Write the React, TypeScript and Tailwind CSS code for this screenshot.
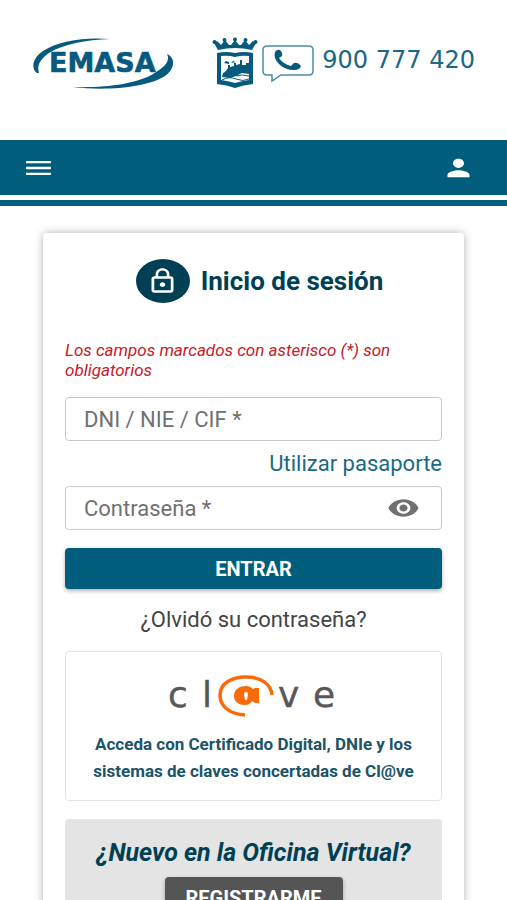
import { useState } from "react"
import { MdLockOutline, MdMenu, MdPerson, MdVisibility } from "react-icons/md"

function EmasaLogo() {
    return (
        <svg className="w-[144px] h-[54px] shrink-0" viewBox="0 0 144 54" role="img" aria-label="EMASA">
            <path d="M5 36C-1 32 0 21 11 14C28 3 54 0 78 2C54 3 31 7 17 16C7 23 5 29 7 36Z" fill="#075a7d" />
            <path d="M135 17C144 21 143 32 133 39C114 51 73 54 41 50C74 51 104 47 121 37C135 29 138 23 135 17Z" fill="#075a7d" />
            <text x="17" y="35" fontFamily="DejaVu Sans, sans-serif" fontWeight="700" fontSize="27" fill="#075a7d" stroke="#075a7d" strokeWidth="0.6">EMASA</text>
        </svg>
    )
}

function MalagaCrest() {
    return (
        <svg className="w-[46px] h-[52px] shrink-0" viewBox="0 0 46 52" fill="#075a7d" aria-hidden="true">
            <path d="M6 13L2 6L5 4L9 8L13 3L17 8H19L23 3L27 8H29L33 3L37 8L41 4L44 6L40 13Q23 9 6 13Z" />
            <circle cx="2.5" cy="5" r="2" />
            <circle cx="12.5" cy="3" r="2" />
            <circle cx="23" cy="2.5" r="2" />
            <circle cx="33.5" cy="3" r="2" />
            <circle cx="43.5" cy="5" r="2" />
            <path d="M5 16Q14 14 23 16Q32 14 41 16V47Q31 48 23 51Q15 48 5 47Z" />
            <path d="M9 19Q16 18 23 20Q30 18 37 19V43Q30 44 23 46Q16 44 9 43Z" fill="#fff" />
            <path d="M10 40L11 36L13 35L16 31V28H18V30L22 29V26H24V28L28 27V23H30V28H34V26H37V37L30 36L24 39L18 41Z" />
            <path d="M12 26L14 24L17 25V27ZM19 26L21 24L24 25Z" />
            <path d="M10 43Q17 39 24 42T37 42M24 39Q30 37 37 39" fill="none" stroke="#075a7d" strokeWidth="1" />
        </svg>
    )
}

function PhoneBubble() {
    return (
        <svg className="w-[52px] h-[38px] shrink-0" viewBox="0 0 52 38" aria-hidden="true">
            <path d="M5 1H47Q51 1 51 5V26Q51 30 47 30H19L10 36V30H5Q1 30 1 26V5Q1 1 5 1Z" fill="#fff" stroke="#4d8ea6" strokeWidth="1.5" />
            <path d="M13 7Q15 4 18 5Q21 8 20 11L17 13Q21 19 29 21L32 18Q36 17 39 21Q38 25 32 25Q23 25 17 19Q11 13 13 7Z" fill="#075a7d" />
        </svg>
    )
}

function ClaveLogo() {
    return (
        <svg className="w-[170px] h-[44px]" viewBox="0 0 170 44" fontFamily="DejaVu Sans, sans-serif" fontSize="36" fill="#58585a" role="img" aria-label="cl@ve">
            <g stroke="#58585a" strokeWidth="0.4">
                <text x="-1" y="33">c</text>
                <text x="33" y="33">l</text>
                <text x="109" y="33">v</text>
                <text x="144" y="33">e</text>
            </g>
            <path d="M76 41C60 40 51 32 51 21C51 9 63 3 77 3C92 3 102 10 103 21" fill="none" stroke="#f96a0b" strokeWidth="3.5" />
            <path d="M65 22C65 15 71 12 77 12C80 12 82 13 84 15L86 14H90V29H86L83 27C81 30 79 31 76 31C70 31 65 28 65 22Z" fill="#f96a0b" />
            <path d="M75 20A2 2 0 1 1 79 20L78 26H76Z" fill="#fff" />
        </svg>
    )
}

function App() {
    const [showPassword, setShowPassword] = useState(false)

    return (
        <div className="bg-white font-[Roboto,sans-serif]">
            <header>
                <div className="h-[140px] flex items-start justify-between px-8 pt-[37px]">
                    <EmasaLogo />
                    <div className="flex items-start">
                        <MalagaCrest />
                        <div className="flex items-start pt-2 ml-1">
                            <PhoneBubble />
                            <a href="tel:900777420" className="ml-2 mt-px text-2xl leading-7 whitespace-nowrap text-[#1d6685] font-['DejaVu_Sans',sans-serif]">900 777 420</a>
                        </div>
                    </div>
                </div>
                <nav className="h-[55px] flex items-center justify-between bg-[#005e7c] pl-[22px] pr-8 text-white">
                    <button type="button" aria-label="Menú">
                        <MdMenu className="w-[33px] h-7" preserveAspectRatio="none" />
                    </button>
                    <button type="button" aria-label="Mi cuenta">
                        <MdPerson className="w-[33px] h-7" preserveAspectRatio="none" />
                    </button>
                </nav>
                <div className="mt-[5px] h-1.5 bg-[#005e7c]" />
            </header>

            <main className="mx-[43px] mt-[27px] mb-8 rounded-sm bg-white px-[22px] pt-[26px] pb-6 shadow-[0_0_8px_rgba(0,0,0,0.3)]">
                <div className="flex items-center justify-center gap-[11px] pl-3">
                    <span className="w-[54px] h-11 rounded-[50%] bg-[#003f54] text-white flex items-center justify-center">
                        <MdLockOutline className="w-[33px] h-7" preserveAspectRatio="none" />
                    </span>
                    <h1 className="text-[26px] leading-8 font-bold text-[#003f54]">Inicio de sesión</h1>
                </div>

                <form onSubmit={(e) => e.preventDefault()}>
                    <p className="mt-[37px] text-[17px] leading-5 italic text-[#c62026]">Los campos marcados con asterisco (*) son obligatorios</p>
                    <input
                        type="text"
                        aria-label="DNI / NIE / CIF"
                        placeholder="DNI / NIE / CIF *"
                        required
                        className="mt-[17px] block h-11 w-full rounded border border-[#c8c8c8] px-[18px] text-[22px] text-[#333] placeholder:text-[#707070]"
                    />
                    <div className="flex h-[45px] items-center justify-end">
                        <a href="#pasaporte" className="text-[22px] text-[#1a6a86]">Utilizar pasaporte</a>
                    </div>
                    <div className="flex h-11 items-center rounded border border-[#c8c8c8] pr-[21px] pl-[18px]">
                        <input
                            type={showPassword ? "text" : "password"}
                            aria-label="Contraseña"
                            placeholder="Contraseña *"
                            required
                            className="min-w-0 flex-1 text-[22px] text-[#333] placeholder:text-[#707070]"
                        />
                        <button type="button" aria-label="Mostrar contraseña" className="text-[#707070]" onClick={() => setShowPassword(!showPassword)}>
                            <MdVisibility className="w-[33px] h-7" preserveAspectRatio="none" />
                        </button>
                    </div>
                    <button type="submit" className="mt-[18px] h-[41px] w-full rounded bg-[#005e7c] text-xl font-bold text-white shadow-[0_2px_4px_rgba(0,0,0,0.3)]">ENTRAR</button>
                </form>

                <div className="mt-4 flex justify-center">
                    <a href="#recuperar" className="text-[22px] leading-[30px] text-[#444]">¿Olvidó su contraseña?</a>
                </div>

                <a href="#clave" className="mt-4 flex h-[150px] flex-col items-center rounded border border-[#e4e4e4] px-5 pt-[22px] text-center">
                    <ClaveLogo />
                    <span className="mt-[13px] text-[17px] leading-[27px] font-bold text-[#1c5468]">Acceda con Certificado Digital, DNIe y los sistemas de claves concertadas de Cl@ve</span>
                </a>

                <section className="mt-[18px] flex flex-col items-center rounded bg-[#e4e4e4] pt-[18px] pb-6">
                    <h2 className="text-[25px] leading-8 font-bold italic text-[#003f54]">¿Nuevo en la Oficina Virtual?</h2>
                    <button type="button" className="mt-2 h-[41px] w-[178px] rounded bg-[#555] text-xl font-bold text-white shadow-[0_2px_4px_rgba(0,0,0,0.3)]">REGISTRARME</button>
                </section>
            </main>
        </div>
    )
}

export default App
